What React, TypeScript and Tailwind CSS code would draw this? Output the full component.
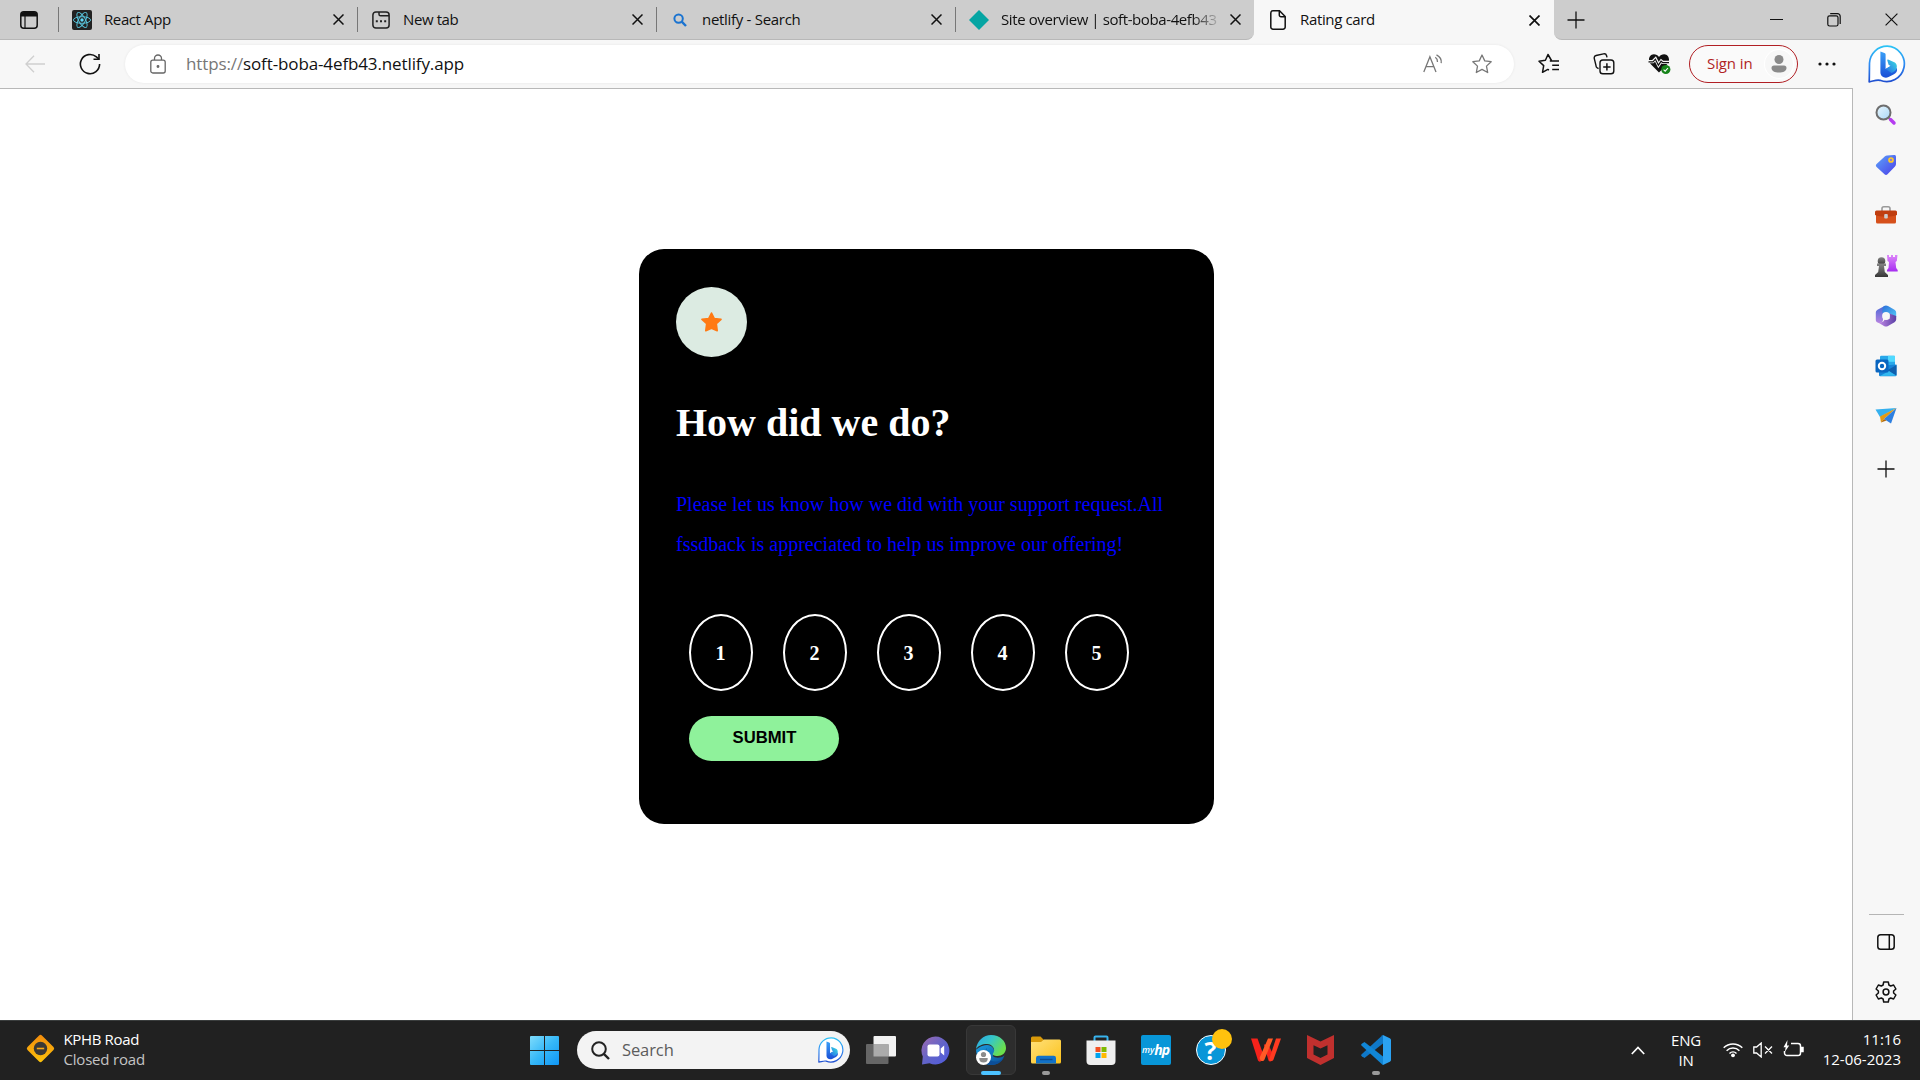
import React from "react";

const UI = "font-['Open_Sans','Noto_Sans',sans-serif]";

function Close({ s = 11, w = 1.5, c = "#111" }: { s?: number; w?: number; c?: string }) {
  return (
    <svg width={s} height={s} viewBox="0 0 11 11" className="block shrink-0">
      <path d="M.5.5l10 10M10.5.5l-10 10" stroke={c} strokeWidth={w} fill="none" />
    </svg>
  );
}

function Plus() {
  return (
    <svg width="18" height="18" viewBox="0 0 18 18" className="block">
      <path d="M9 .5v17M.5 9h17" stroke="#111" strokeWidth="1.3" />
    </svg>
  );
}

function ReactIcon() {
  return (
    <svg width="20" height="20" viewBox="0 0 20 20" className="block">
      <rect width="20" height="20" rx="2" fill="#222" />
      <g fill="none" stroke="#58c4dc" strokeWidth="0.95">
        <ellipse cx="10" cy="10" rx="8.6" ry="3.3" transform="rotate(0 10 10)" />
        <ellipse cx="10" cy="10" rx="8.6" ry="3.3" transform="rotate(60 10 10)" />
        <ellipse cx="10" cy="10" rx="8.6" ry="3.3" transform="rotate(120 10 10)" />
      </g>
      <circle cx="10" cy="10" r="1.7" fill="#61dafb" />
    </svg>
  );
}

function NewTabIcon() {
  return (
    <svg width="18" height="18" viewBox="0 0 18 18" className="block" fill="none" stroke="#222" strokeWidth="1.5">
      <rect x=".9" y=".9" width="16.2" height="16.2" rx="3" />
      <path d="M7 1v2.2a1.6 1.6 0 0 0 1.600 1.600H17" />
      <path d="M3.800 10.300h2M8 10.300h2M12.200 10.300h2" strokeWidth="2" />
    </svg>
  );
}

function Bing({ size, id }: { size: number; id: string }) {
  return (
    <svg width={size} height={size} viewBox="0 0 38 38" className="block">
      <defs>
        <linearGradient id={id + "a"} x1="0" y1="0" x2="0" y2="1">
          <stop offset="0" stopColor="#2bc3f5" />
          <stop offset=".5" stopColor="#2f8bf2" />
          <stop offset="1" stopColor="#1f4fd0" />
        </linearGradient>
        <linearGradient id={id + "b"} x1="0" y1="0" x2="0" y2="1">
          <stop offset="0" stopColor="#3aa0f8" />
          <stop offset="1" stopColor="#1a4fd6" />
        </linearGradient>
        <linearGradient id={id + "c"} x1="0" y1="1" x2="1" y2="0">
          <stop offset="0" stopColor="#2468e8" />
          <stop offset="1" stopColor="#3be0e0" />
        </linearGradient>
      </defs>
      <path
        d="M19.200 1.200A17.700 17.700 0 1 1 12 35.300C8.500 34.500 5 36.200 1.200 36.800C1.400 31 1.400 24 1.500 18A17.700 17.700 0 0 1 19.200 1.200Z"
        fill="#fff" stroke={`url(#${id}a)`} strokeWidth="1.700" strokeLinejoin="round"
      />
      <path d="M12.400 6.500l4 1.500c.8.300 1.200.8 1.200 1.600v14.300l5-2.900 5.900 2c1.800 3-.8 5.300-3 6.600l-5 2.500c-4 1.700-8-.700-8.100-4.600z" fill={`url(#${id}b)`} />
      <path d="M17.600 23.900l5-2.900-2-1.200-1.300-4.400c-.2-.7.200-1 .8-.8l6.200 2.700c2.600 1.200 3 4.200 2.200 6.400-1 2-3 3.400-5 4.300z" fill={`url(#${id}c)`} />
    </svg>
  );
}

const tabs = [
  { title: "React App", cls: "tracking-[-0.4px]", icon: <ReactIcon /> },
  { title: "New tab", cls: "tracking-[-0.4px]", icon: <NewTabIcon /> },
  {
    title: "netlify - Search", cls: "tracking-[-0.3px]",
    icon: (
      <svg width="14" height="14" viewBox="0 0 14 14" fill="none" stroke="#1a73d0" strokeWidth="2">
        <circle cx="5.600" cy="5.600" r="4.200" /><path d="M8.700 8.700l4.300 4.300" strokeWidth="2.400" />
      </svg>
    ),
  },
  {
    title: "Site overview | soft-boba-4efb43", cls: "tracking-[-0.4px] [mask-image:linear-gradient(90deg,#000_88%,transparent_102%)]",
    icon: <svg width="20" height="20" viewBox="0 0 20 20"><path d="M10 0l10 10-10 10L0 10z" fill="#05a5a3" /></svg>,
  },
];

function TabStrip() {
  return (
    <div className="flex h-10 bg-[#f7f7f7]">
      <div className="flex h-10 w-[1254px] shrink-0 items-center rounded-br-lg border-b border-[#b8b8b8] bg-[#cdcdcd]">
        <div className="flex w-[59px] justify-center">
          <svg width="18" height="18" viewBox="0 0 18 18" className="block">
            <rect x=".8" y=".8" width="16.400" height="16.400" rx="3" fill="none" stroke="#111" strokeWidth="1.500" />
            <path d="M1 4a3 3 0 0 1 3-3h10a3 3 0 0 1 3 3v1.500H1z" fill="#111" />
            <path d="M5 5v12" stroke="#111" strokeWidth="1.200" />
          </svg>
        </div>
        {tabs.map((t) => (
          <div key={t.title} className="flex h-[25px] w-[299px] shrink-0 items-center border-l border-[#777]">
            <div className="ml-[12px] flex w-[22px] justify-center">{t.icon}</div>
            <div className={"ml-[11px] w-[217px] overflow-hidden pb-[2px] text-[15px] leading-5 whitespace-nowrap text-[#111] " + t.cls}>{t.title}</div>
            <div className="ml-[12px]"><Close /></div>
          </div>
        ))}
      </div>
      <div className="flex h-10 w-[300px] shrink-0 items-center bg-[#f7f7f7]">
        <svg width="16" height="20" viewBox="0 0 16 20" className="ml-4 block" fill="none" stroke="#111" strokeWidth="1.500">
          <path d="M3 .8h6.500L15.200 6.500V17a2.200 2.200 0 0 1-2.200 2.200H3A2.200 2.200 0 0 1 .8 17V3A2.200 2.200 0 0 1 3 .8z" />
          <path d="M9.300 1v4a1.700 1.700 0 0 0 1.700 1.700h4" />
        </svg>
        <div className="ml-[14px] w-[217px] pb-[2px] text-[15px] leading-5 tracking-[-0.35px] text-[#111]">Rating card</div>
        <div className="ml-[12px]"><Close w={1.700} /></div>
      </div>
      <div className="flex h-10 grow items-center rounded-bl-lg border-b border-[#b8b8b8] bg-[#cdcdcd]">
        <div className="ml-[13px]"><Plus /></div>
        <div className="ml-[185px] h-px w-[13px] bg-[#111]" />
        <svg width="14" height="14" viewBox="0 0 14 14" className="ml-[44px] block" fill="none" stroke="#111" strokeWidth="1.200">
          <rect x=".8" y="2.800" width="10.200" height="10.200" rx="1.800" />
          <path d="M3.200.7h7.300a2.700 2.700 0 0 1 2.700 2.700v7.600" />
        </svg>
        <div className="ml-[44px]"><Close s={13} w={1} /></div>
      </div>
    </div>
  );
}

function Toolbar() {
  return (
    <div className="flex h-12 shrink-0 items-center bg-[#f7f7f7]">
      <svg width="20" height="18" viewBox="0 0 20 18" className="ml-[25px] block" fill="none" stroke="#cfcfcf" strokeWidth="1.300">
        <path d="M20 9H1M9 .8L1 9l8 8.200" />
      </svg>
      <svg width="22" height="22" viewBox="0 0 22 22" className="ml-[34px] block" fill="none" stroke="#111" strokeWidth="1.600">
        <path d="M20.600 11a9.600 9.600 0 1 1-3.200-7.100L19.800 6" /><path d="M20 1v5.300h-5.500" />
      </svg>
      <div className="ml-[24px] flex h-[38px] w-[1389px] items-center rounded-full bg-white shadow-[0_0_3px_rgba(0,0,0,0.07)]">
        <svg width="16" height="20" viewBox="0 0 16 20" className="mb-px ml-[25px] block" fill="none" stroke="#666" strokeWidth="1.300">
          <rect x=".8" y="6.200" width="14.400" height="12.800" rx="2" />
          <path d="M4.500 6V4.500a3.500 3.500 0 0 1 7 0V6" /><circle cx="8" cy="12.500" r=".8" fill="#666" />
        </svg>
        <div className="ml-[20px] w-[1237px] pb-px text-[17px] leading-6 tracking-[-0.12px] whitespace-nowrap text-[#111]">
          <span className="text-[#777]">https://</span>soft-boba-4efb43.netlify.app
        </div>
        <svg width="20" height="19" viewBox="0 0 20 19" className="mb-[2px] block" fill="none" stroke="#777" strokeWidth="1.300">
          <path d="M.8 18L6.900 2.800 13 18M3 12.700h7.900" />
          <path d="M12.300 3.300c1.600 1.100 2.300 2.700 2.200 4.700M13.500.9c3.500 1.700 5.200 4.600 4.700 8.300" />
        </svg>
        <svg width="22" height="22" viewBox="0 0 24 24" className="ml-[28px] block" fill="none" stroke="#777" strokeWidth="1.400" strokeLinejoin="round">
          <path d="M12 2.200l3 6.400 7 .9-5.100 4.800 1.300 7-6.200-3.400-6.200 3.400 1.300-7L2 9.500l7-.9z" />
        </svg>
      </div>
      <svg width="22" height="22" viewBox="0 0 22 22" className="ml-[24px] block" fill="none" stroke="#111" strokeWidth="1.500" strokeLinejoin="round">
        <path d="M13.500 7.500L10 1.500 7.400 7.300 1 8.200l4.700 4.400-1.200 6.700 5.300-2.900 1.200.6M11.800 7.900H21M14.200 12.200H21M14.200 16.500H21" />
      </svg>
      <svg width="22" height="22" viewBox="0 0 22 22" className="ml-[33px] block" fill="none" stroke="#111" strokeWidth="1.400">
        <rect x="7" y="7" width="13.800" height="13.800" rx="2.800" />
        <path d="M13.900 10.200v7.400M10.200 13.900h7.400" strokeWidth="1.500" />
        <path d="M5.600 15.600l-1.300-.6A2.600 2.600 0 0 1 3 12.500L1.300 5.600A2.600 2.600 0 0 1 3.100 2.500l7.400-1.600a2.600 2.600 0 0 1 3.100 1.800l.4 1.700" />
      </svg>
      <svg width="24" height="22" viewBox="0 0 24 22" className="ml-[33px] block">
        <path d="M11 19.500L2.600 11C-.5 7.500 1 1.500 5.800 1.300c2.300 0 4 1 5.200 2.800 1.200-1.800 3-2.800 5.200-2.800 4.800.2 6.300 6.200 3.200 9.700z" fill="#111" />
        <path d="M0 8.700h4.800l2.700-2.700 3 6 2.700-4 1.700 1.400h6.600" fill="none" stroke="#f7f7f7" strokeWidth="3.200" />
        <path d="M.5 8.900h4.500l2.400-2.700 3 6 2.700-4 1.700 1.400h6.200" fill="none" stroke="#111" strokeWidth="1.200" />
        <circle cx="17.800" cy="16.500" r="4.600" fill="#16841a" />
        <path d="M15.600 16.700l1.600 1.500 2.800-3.200" fill="none" stroke="#fff" strokeWidth="1.100" />
      </svg>
      <div className="ml-[17px] flex h-[38px] w-[109px] shrink-0 items-center rounded-full border-[1.500px] border-[#b11f24] bg-[#fafafa]">
        <div className="ml-[17px] w-[50px] pb-[2px] text-[15px] leading-5 tracking-[-0.1px] whitespace-nowrap text-[#b11f24]">Sign in</div>
        <div className="ml-[8px] flex size-[28px] items-center justify-center rounded-full bg-[#f7f7f7] shadow-[0_0_0_1px_#fff]">
          <svg width="16" height="18" viewBox="0 0 16 18" fill="#8a8a8a">
            <circle cx="8" cy="4.500" r="4.500" /><path d="M3 10.500h10a2.500 2.500 0 0 1 2.500 2.500c0 3-3.300 4.600-7.500 4.600S.5 16 .5 13A2.500 2.500 0 0 1 3 10.500z" />
          </svg>
        </div>
      </div>
      <svg width="18" height="4" viewBox="0 0 18 4" className="ml-[20px] block" fill="#111">
        <circle cx="2" cy="2" r="1.600" /><circle cx="9" cy="2" r="1.600" /><circle cx="16" cy="2" r="1.600" />
      </svg>
      <div className="ml-[32px]"><Bing size={38} id="tb" /></div>
    </div>
  );
}

function Sidebar() {
  const items = [
    <svg key="s" width="22" height="22" viewBox="0 0 22 22">
      <defs><linearGradient id="lens" x1="0" y1="0" x2="1" y2="1"><stop stopColor="#e9f6ff" /><stop offset="1" stopColor="#a9d8f5" /></linearGradient></defs>
      <path d="M13 13l3 3" stroke="#888" strokeWidth="2" /><path d="M15.500 15.500l3.500 3.500" stroke="#b53cf0" strokeWidth="3.500" strokeLinecap="round" />
      <circle cx="8.500" cy="8.500" r="7" fill="url(#lens)" stroke="#6e6e6e" strokeWidth="2" />
    </svg>,
    <svg key="t" width="22" height="22" viewBox="0 0 22 22">
      <defs><linearGradient id="tag" x1="0" y1="0" x2="1" y2="1"><stop stopColor="#5ca4fa" /><stop offset="1" stopColor="#4b3ee8" /></linearGradient></defs>
      <path d="M12 1.500L19 1c1.500 0 2 .5 2 2v7c0 1-.3 1.700-1 2.400l-7.500 7.800c-1 1-2 1-3 0L1.600 13c-1-1-1-2 0-3L10 2.300c.6-.5 1.200-.8 2-.8z" fill="url(#tag)" />
      <circle cx="16" cy="6" r="2" fill="#8a79d8" stroke="#ffc928" strokeWidth="1.700" />
    </svg>,
    <svg key="b" width="24" height="20" viewBox="0 0 24 20">
      <path d="M8 6V3.500A1.800 1.800 0 0 1 9.800 1.700h4.400A1.800 1.800 0 0 1 16 3.500V6" fill="none" stroke="#9a9a9a" strokeWidth="1.600" />
      <path d="M2 9h20v8a1.500 1.500 0 0 1-1.500 1.500h-17A1.500 1.500 0 0 1 2 17z" fill="#d6501b" />
      <path d="M1 7a1.500 1.500 0 0 1 1.500-1.500h19A1.500 1.500 0 0 1 23 7v3c-3 1.200-6 1.700-11 1.700S4 11.200 1 10z" fill="#c03e10" />
      <rect x="10.200" y="9" width="3.600" height="4.500" rx="1" fill="#ccc" />
    </svg>,
    <svg key="c" width="24" height="24" viewBox="0 0 24 24">
      <defs><linearGradient id="pawn" x1="0" y1="0" x2="0" y2="1"><stop stopColor="#858585" /><stop offset="1" stopColor="#383838" /></linearGradient>
        <linearGradient id="rook" x1="0" y1="0" x2="0" y2="1"><stop stopColor="#dd86fa" /><stop offset="1" stopColor="#a62df0" /></linearGradient></defs>
      <path d="M13 1h2v2h2V1h2v2h2V1h2.500l-.7 6-1.300 1 .7 6 1.500 2v1.500H13V16l1.500-2L15 8l-1.500-1z" fill="url(#rook)" />
      <circle cx="7.500" cy="7" r="3.800" fill="url(#pawn)" />
      <path d="M3 9.500h9v2.500h-2l.8 6L14 21v2H1v-2l3.200-3 .8-6H3z" fill="url(#pawn)" />
    </svg>,
    <svg key="m" width="22" height="24" viewBox="0 0 22 24">
      <defs><linearGradient id="mA" x1="0" y1="0" x2="0" y2="1"><stop stopColor="#4a6ad8" /><stop offset="1" stopColor="#b583e0" /></linearGradient>
        <linearGradient id="mB" x1="0" y1="0" x2="1" y2="1"><stop stopColor="#2b6fd8" /><stop offset="1" stopColor="#53c8f8" /></linearGradient>
        <linearGradient id="mC" x1="0" y1="0" x2="1" y2="0"><stop stopColor="#c48be8" /><stop offset="1" stopColor="#5a3fa5" /></linearGradient></defs>
      <path d="M9.500 2L2.500 5.800C1.300 6.600.8 7.500.8 9v7c0 1.500 1.200 2.700 3 3 2.500.2 4-1 4.200-3V9z" fill="url(#mA)" />
      <path d="M9 2c1.300-.8 2.700-.8 4 0l6.500 3.800c1.200.8 1.700 1.700 1.700 3.200v4L14 9.500 7.500 9C7 6 7.500 3.500 9 2z" fill="url(#mB)" />
      <path d="M21.200 12v3c0 1.500-.5 2.400-1.700 3.200L13 22c-1.300.8-2.700.8-4 0l-6-3.500c4 .5 6-1 6.500-3l5-.5V9.500z" fill="url(#mC)" />
      <circle cx="11" cy="12" r="3.900" fill="#f7f7f7" />
    </svg>,
    <svg key="o" width="22" height="22" viewBox="0 0 22 22">
      <rect x="5" y=".8" width="15" height="13" rx="1.200" fill="#28a8ea" /><rect x="13" y=".8" width="7" height="6" fill="#50d9ff" />
      <path d="M4 11l17.500-1.500V20a1.200 1.200 0 0 1-1.200 1.200H5.200A1.200 1.200 0 0 1 4 20z" fill="#1684d8" /><path d="M21.500 10v10.500L12 15.500z" fill="#0f5fae" /><path d="M5 21l9-5 7.300 4.800z" fill="#32b8f0" />
      <rect x=".5" y="4.500" width="13" height="13" rx="1.500" fill="#0a66c0" /><circle cx="7" cy="11" r="3.200" fill="none" stroke="#fff" strokeWidth="2" />
    </svg>,
    <svg key="p" width="22" height="18" viewBox="0 0 22 18">
      <path d="M.5 2.500L21.500 1 5 10z" fill="#35b0ee" /><path d="M21.500 1L5 9.500l1 6 3-3.500z" fill="#e39a12" /><path d="M21.500 1L9 12l7 4.500z" fill="#2d7fe0" /><path d="M6 15.500l3-3.500 2.500 1.500z" fill="#b06a10" />
    </svg>,
  ];
  return (
    <div className="flex w-[67px] shrink-0 flex-col items-center bg-[#f7f7f7] pt-[2px] pr-[1px]">
      {items.map((it, i) => <div key={i} className="flex h-[50.200px] w-full shrink-0 items-center justify-center">{it}</div>)}
      <div className="mt-[19px]"><Plus /></div>
      <div className="mt-auto h-px w-[35px] bg-[#b5b5b5]" />
      <svg width="18" height="16" viewBox="0 0 18 16" className="mt-[19px] block" fill="none" stroke="#111" strokeWidth="1.500">
        <rect x=".8" y=".8" width="16.400" height="14.400" rx="2.800" /><path d="M12.300 1v14" />
      </svg>
      <svg width="22" height="22" viewBox="0 0 22 22" className="mt-[31px] mb-[17px] block" fill="none" stroke="#111" strokeWidth="1.500" strokeLinejoin="round">
        <path d="M8.700 1h4.600l.6 3 1.800 1 2.900-1 2.300 4-2.300 2v2l2.300 2-2.300 4-2.900-1-1.800 1-.6 3H8.700l-.6-3-1.800-1-2.900 1-2.300-4 2.300-2v-2L1.100 8l2.300-4 2.900 1 1.800-1z" />
        <circle cx="11" cy="11" r="2.900" />
      </svg>
    </div>
  );
}

function RatingCard() {
  return (
    <div className="mt-[160px] flex h-[575px] w-[575px] flex-col items-start rounded-[25px] bg-black px-[37px] pt-[38px] font-['Liberation_Serif',serif]">
      <div className="flex h-[70px] w-[71px] shrink-0 items-center justify-center rounded-[50%] bg-[#dcebe2]">
        <svg width="21" height="20" viewBox="0 0 21 20" fill="#ff7a14" stroke="#ff7a14" strokeWidth="1.600" strokeLinejoin="round">
          <path d="M10.500 1l2.800 5.500 6.700.9-4.700 4.300.9 7-5.700-2.400-5.700 2.400.9-7L1 7.400l6.700-.9z" />
        </svg>
      </div>
      <h1 className="mt-[43px] text-[40px] leading-[46px] font-bold whitespace-nowrap text-white">How did we do?</h1>
      <p className="mt-[38px] text-[20px] leading-[40px] whitespace-nowrap text-[#0000ff]">
        Please let us know how we did with your support request.All<br />fssdback is appreciated to help us improve our offering!
      </p>
      <div className="mt-[50px] ml-[13px] flex gap-[30px]">
        {[1, 2, 3, 4, 5].map((n) => (
          <button key={n} className="flex h-[77px] w-[64px] items-center justify-center rounded-[50%] border-2 border-white pr-px text-[20px] font-bold text-white">{n}</button>
        ))}
      </div>
      <button className="mt-[25px] ml-[13px] h-[45px] w-[150px] rounded-[25px] bg-[#8ff29b] pb-[1px] pl-px font-['Liberation_Sans',sans-serif] text-[16.670px] leading-5 font-bold text-black">SUBMIT</button>
    </div>
  );
}

function Edge() {
  return (
    <svg width="32" height="32" viewBox="0 0 32 32" className="block">
      <defs>
        <linearGradient id="eA" x1="0" y1="0" x2="1" y2=".5"><stop stopColor="#2aa7e8" /><stop offset=".5" stopColor="#36c6c8" /><stop offset="1" stopColor="#6be04c" /></linearGradient>
        <linearGradient id="eB" x1="0" y1="0" x2="1" y2="1"><stop stopColor="#1b9de2" /><stop offset="1" stopColor="#0b4d96" /></linearGradient>
      </defs>
      <path d="M1 15.500C3 15 6 11 12 11c5 0 8 4 7 8-.3 1.200-1.500 2-1 3 1 2 8 2.500 11.500-.5C27 28 21.500 31 16 31 8 31 1 24.500 1 15.500z" fill="url(#eB)" />
      <path d="M1 15C2 7 8.500 1 16 1c9 0 15 6 15 13 0 5-4 8-8.500 8-3.500 0-5.500-1.200-4.500-2.500 3-3.500 0-9.300-6-9.500C7 10 3 12 1 15z" fill="url(#eA)" />
      <path d="M12 14c-3 6 1 14 9 13.500 3.500-.2 6-1.500 8-4C26.500 28.500 21.500 31 16 31c-6 0-9-12-4-17z" fill="#0c4f99" />
      <circle cx="8.500" cy="23.500" r="7.500" fill="#fff" /><circle cx="8.500" cy="20.500" r="2.600" fill="#8b8b8b" /><path d="M4.300 24h8.400c.3 3-1.500 4.500-4.200 4.500S4 27 4.300 24z" fill="#8b8b8b" />
    </svg>
  );
}

const apps: { id: string; icon: React.ReactNode; mark?: string }[] = [
  { id: "tasks", icon: <svg width="30" height="28" viewBox="0 0 30 28"><rect x="7.500" y="0" width="22.500" height="20.500" rx="1" fill="#f2f2f2" /><rect x="0" y="8" width="22.500" height="20" rx="1" fill="#666" /><path d="M7.500 8h15v12.500h-15z" fill="#ababab" /></svg> },
  {
    id: "chat", icon: <svg width="29" height="29" viewBox="0 0 29 29"><defs><linearGradient id="ch" x1="0" y1="0" x2="1" y2="1"><stop stopColor="#a06ab0" /><stop offset=".5" stopColor="#6264c8" /><stop offset="1" stopColor="#4f5be0" /></linearGradient></defs>
      <path d="M14.500.5a14 14 0 1 1-6 26.700L1 28.500l.8-8A14 14 0 0 1 14.500.5z" fill="url(#ch)" /><rect x="6.500" y="8.500" width="12" height="12" rx="2" fill="#fff" /><path d="M19.700 12.500l3.500-3v10l-3.500-3z" fill="#fff" /></svg>,
  },
  { id: "edge", icon: <Edge />, mark: "active" },
  {
    id: "files", mark: "open", icon: <svg width="30" height="28" viewBox="0 0 30 28"><defs><linearGradient id="fo" x1="0" y1="0" x2="1" y2="1"><stop stopColor="#ffe07a" /><stop offset="1" stopColor="#fcc21b" /></linearGradient></defs>
      <path d="M0 2a1.500 1.500 0 0 1 1.500-1.500h8L13 4v5H0z" fill="#d99a0a" /><path d="M0 6h10l3-2.500h15.500A1.500 1.500 0 0 1 30 5v21a1.500 1.500 0 0 1-1.500 1.500h-27A1.500 1.500 0 0 1 0 26z" fill="url(#fo)" />
      <path d="M5 27.500V22a2.300 2.300 0 0 1 2.300-2.300h15.400A2.300 2.300 0 0 1 25 22v5.500z" fill="#1272c8" /><path d="M9 23.500h12.500" stroke="#0b4c92" strokeWidth="1.400" /></svg>,
  },
  {
    id: "store", icon: <svg width="30" height="30" viewBox="0 0 30 30"><path d="M8.500 6V2.500a1 1 0 0 1 1-1h11a1 1 0 0 1 1 1V6" fill="none" stroke="#38b4ee" strokeWidth="2" />
      <path d="M.5 5.500h29V26a4 4 0 0 1-4 4h-21a4 4 0 0 1-4-4z" fill="#efefef" /><path d="M9.500 12h5v5h-5z" fill="#f25022" /><path d="M15.500 12h5v5h-5z" fill="#7fba00" /><path d="M9.500 18h5v5h-5z" fill="#00a4ef" /><path d="M15.500 18h5v5h-5z" fill="#ffb900" /></svg>,
  },
  { id: "hp", icon: <div className="flex size-[30px] items-center justify-center rounded-[2px] bg-[#0896d8] pb-px text-white italic"><span className="text-[9px] leading-none font-semibold">my</span><span className="text-[14px] leading-none font-bold tracking-[-1px]">hp</span></div> },
  {
    id: "help", icon: <div className="relative size-[30px]"><div className="flex size-[30px] items-center justify-center rounded-full border-[1.500px] border-white bg-[#0896d8] text-[25px] leading-none font-bold text-white">?</div><div className="absolute -top-[6px] left-[16px] size-5 rounded-full bg-[#ffc20e]" /></div>,
  },
  {
    id: "wps", icon: <svg width="30" height="24" viewBox="0 0 30 24"><path d="M12.800 6.500h4.500L22.500 17 21 22.500c-1 1.200-2.800 1.200-3.500 0z" fill="#f5221b" /><path d="M0 .5h6.500L12.500 17l-1.800 5.500c-.8 1.500-3 1.500-3.700 0z" fill="#f5221b" /><path d="M17 .5h5L13.500 21.500c-.8 2-3.500 2-4.200.3L8.500 20z" fill="#ff5a26" /><path d="M25 .5h5L22.500 21.500c-.8 2-3.700 2-4.500.3z" fill="#ff3a20" /></svg>,
  },
  { id: "mcafee", icon: <svg width="27" height="30" viewBox="0 0 27 30"><path d="M0 0l13.500 6.500L27 0v23l-13.500 7L0 23zM6.500 10.200v9.200l7 3.700 7-3.700v-9.200l-7 3.300z" fill="#c0302e" fillRule="evenodd" /></svg> },
  {
    id: "code", mark: "open", icon: <svg width="30" height="30" viewBox="0 0 30 30"><path d="M22 0v8.500L3.500 23 .8 21.200a1.300 1.300 0 0 1-.1-2L21.500.3z" fill="#0f78c8" /><path d="M22 30v-8.500L3.500 7 .8 8.800a1.300 1.300 0 0 0-.1 2L21.500 29.700z" fill="#1186d6" /><path d="M22 0l6.800 3.200c.8.400 1.200 1 1.200 1.800v20c0 .8-.4 1.400-1.200 1.800L22 30z" fill="#2ba2f2" /></svg>,
  },
];

function Taskbar() {
  return (
    <div className="flex h-[60px] shrink-0 items-center border-t border-[#3a3d3d] bg-[#212121] pb-[1px]">
      <div className="flex w-[530px] items-center">
        <svg width="29" height="29" viewBox="0 0 29 29" className="mb-[3px] ml-[25.500px] block">
          <defs><linearGradient id="rd" x1="0" y1="0" x2="1" y2="1"><stop stopColor="#f28a0c" /><stop offset="1" stopColor="#fcc40c" /></linearGradient></defs>
          <rect x="4.300" y="4.300" width="20.400" height="20.400" rx="2" transform="rotate(45 14.500 14.500)" fill="url(#rd)" />
          <circle cx="14.500" cy="14.500" r="6.700" fill="#3a3835" /><path d="M10.800 14.500h7.400" stroke="#f8a818" strokeWidth="1.600" />
        </svg>
        <div className="ml-[9px] pb-[2px] text-[15px] leading-5">
          <div className="tracking-[-0.35px] text-white">KPHB Road</div>
          <div className="tracking-[-0.2px] text-[#c4c4c4]">Closed road</div>
        </div>
      </div>
      <svg width="29" height="29" viewBox="0 0 29 29" className="block">
        <defs><linearGradient id="wn" gradientUnits="userSpaceOnUse" x1="0" y1="0" x2="29" y2="29"><stop stopColor="#7fdcfb" /><stop offset=".5" stopColor="#36b8f8" /><stop offset="1" stopColor="#0f96f5" /></linearGradient></defs>
        <path d="M1 0h13v14H0V1a1 1 0 0 1 1-1zM15 0h13a1 1 0 0 1 1 1v13H15zM0 15h14v14H1a1 1 0 0 1-1-1zM15 15h14v13a1 1 0 0 1-1 1H15z" fill="url(#wn)" />
      </svg>
      <div className="ml-[18px] flex h-[38px] w-[273px] items-center rounded-full bg-[#f3f3f3]">
        <svg width="19" height="19" viewBox="0 0 19 19" className="ml-[14px] block" fill="none" stroke="#222" strokeWidth="2"><circle cx="8" cy="8" r="6.800" /><path d="M12.800 12.800l5.200 5.200" strokeWidth="2.400" /></svg>
        <div className="ml-[12px] w-[196px] text-[16.500px] leading-6 tracking-[-0.1px] text-[#5c5c5c]">Search</div>
        <Bing size={26} id="ts" />
      </div>
      <div className="ml-[3px] flex">
        {apps.map((a) => (
          <div key={a.id} className="flex w-[55px] justify-center">
            <div className={"relative flex h-[50px] w-[50px] items-center justify-center rounded-md border " + (a.mark === "active" ? "border-[#383838] bg-[#2d2d2d]" : "border-transparent")}>
              {a.icon}
              {a.mark === "active" && <div className="absolute -bottom-px left-[14px] h-[4px] w-5 rounded-full bg-[#4cc2ff]" />}
              {a.mark === "open" && <div className="absolute -bottom-px left-[20px] h-[4px] w-2 rounded-full bg-[#9a9a9a]" />}
            </div>
          </div>
        ))}
      </div>
      <div className="ml-auto flex items-center text-[15px] text-white">
        <svg width="14" height="9" viewBox="0 0 14 9" className="block" fill="none" stroke="#fff" strokeWidth="1.700"><path d="M.8 8L7 1.500 13.200 8" /></svg>
        <div className="ml-[22px] w-[38px] pb-px text-center leading-5 tracking-[-0.2px]">ENG<br />IN</div>
        <svg width="20" height="16" viewBox="0 0 20 16" className="ml-[18px] block" fill="none" stroke="#fff" strokeWidth="1.500">
          <path d="M.7 5.800a13.200 13.200 0 0 1 18.600 0M3.600 8.700a9 9 0 0 1 12.800 0M6.500 11.500a5 5 0 0 1 7 0" /><circle cx="10" cy="13.300" r="1.900" fill="#fff" stroke="none" />
        </svg>
        <svg width="20" height="16" viewBox="0 0 20 16" className="ml-[10px] block" fill="none" stroke="#fff" strokeWidth="1.300">
          <path d="M.8 5h2.800L8.200 1v14L3.600 11H.8zM12 4.500l7 7M19 4.500l-7 7" />
        </svg>
        <svg width="21" height="18" viewBox="0 0 21 18" className="mb-[3px] ml-[10px] block" fill="none" stroke="#fff" strokeWidth="1.500">
          <path d="M8 3.500h7a2.500 2.500 0 0 1 2.500 2.500v7a2.500 2.500 0 0 1-2.500 2.500H4A2.500 2.500 0 0 1 1.500 13v-2" /><path d="M18.500 7.500h1.500v4h-1.500z" fill="#fff" /><path d="M4.500 0L.5 7.200h2.200L1.800 12l4.400-6.500H4z" fill="#fff" stroke="none" />
        </svg>
        <div className="mr-[19px] ml-[13px] w-[84px] pb-[2px] text-right leading-5">11:16<br />12-06-2023</div>
      </div>
    </div>
  );
}

export default function App() {
  return (
    <div className={"flex h-[1080px] w-[1920px] flex-col overflow-hidden bg-white " + UI}>
      <TabStrip />
      <Toolbar />
      <div className="flex min-h-0 grow">
        <main className="flex w-[1853px] shrink-0 justify-center border-t border-r border-[#b8b8b8] bg-white pl-px"><RatingCard /></main>
        <Sidebar />
      </div>
      <Taskbar />
    </div>
  );
}
